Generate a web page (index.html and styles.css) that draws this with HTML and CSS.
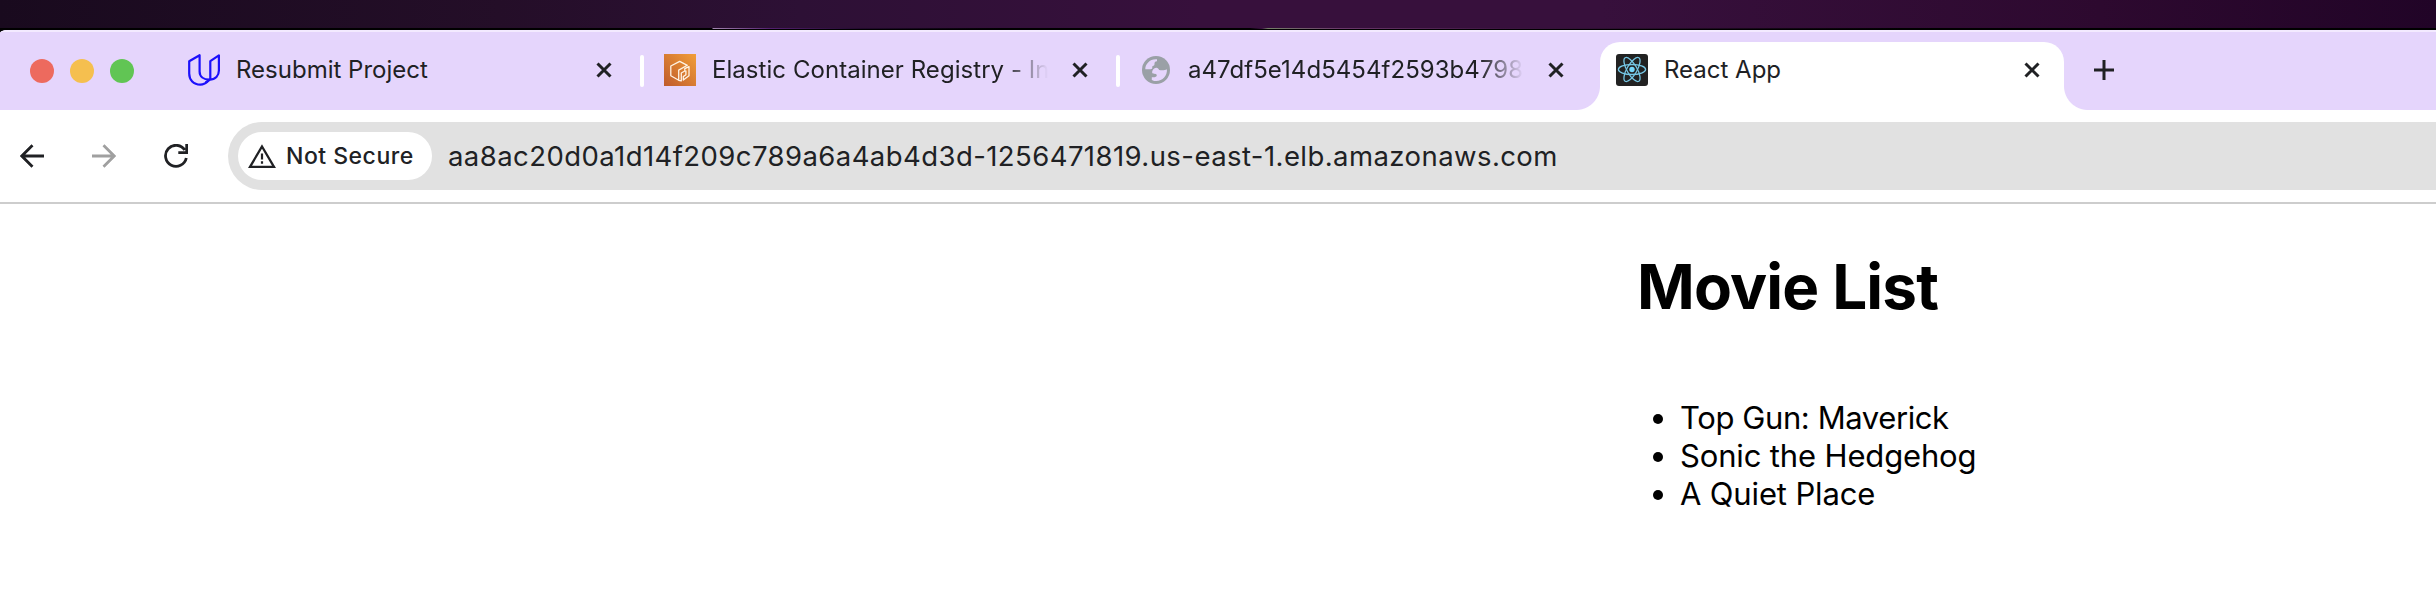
FILE: index.html
```html
<!DOCTYPE html>
<html lang="en">
<head>
<meta charset="utf-8">
<title>React App</title>
<link rel="stylesheet" href="styles.css">
</head>
<body>
<div class="desktop"></div>
<div class="browser">
  <div class="tabstrip">
    <div class="lights"><span class="light red"></span><span class="light yellow"></span><span class="light green"></span></div>
    <div class="tab first">
      <svg class="favicon" viewBox="0 0 32 32" fill="none" stroke="#1c10fb" stroke-width="2.2" stroke-linejoin="round"><path d="M1.2 7.2 11.6 1.2V17.500C11.600 22.500 15.500 25.700 21.500 25.700C18.800 28.500 16 30.700 12.300 30.700C5.500 30.700 1.200 26 1.200 19.500Z"/><path d="M22.300 26V7.200L30.900 1.400V16.500C30.900 21.500 27.500 25.700 21.500 25.700L17.500 28.700"/></svg>
      <span class="title">Resubmit Project</span>
      <svg class="close" viewBox="0 0 16 16"><path d="M1.500 1.500 14.500 14.500M14.500 1.500 1.500 14.500"/></svg>
    </div>
    <span class="separator"></span>
    <div class="tab">
      <svg class="favicon" viewBox="0 0 32 32"><defs><linearGradient id="ecr" x1="0" y1="1" x2="1" y2="0"><stop offset="0" stop-color="#bf5a2b"/><stop offset="1" stop-color="#f19e38"/></linearGradient></defs><path fill="url(#ecr)" d="M0 0H32V32H0Z"/><g fill="none" stroke="#fff3e4" stroke-width="1.300" stroke-linejoin="round"><path d="M14.300 26 6.800 21.700V12L15.700 7.400 23.300 11.300 14.700 16.100V26.300L17.300 26.800V19L20.800 17V14.600L25 12.600V21.700L19.300 26V22.600L21.900 20.800V16.500"/></g></svg>
      <span class="title faded">Elastic Container Registry - In</span>
      <svg class="close" viewBox="0 0 16 16"><path d="M1.500 1.500 14.500 14.500M14.500 1.500 1.500 14.500"/></svg>
    </div>
    <span class="separator"></span>
    <div class="tab third">
      <svg class="favicon" viewBox="0 0 32 32"><circle cx="16" cy="16" r="14" fill="#9aa0a6"/><path fill="#e5d5fc" d="M17 5.300V7.300C14.700 7.500 14.500 8.500 14.500 10.200C14.500 11.700 12.700 11.800 12.300 12.500C12 13.200 12.700 14.200 12 14.700C11 15.500 8 15.200 5.300 15.200C5.200 10 10 4.700 17 5.300ZM16.300 13.800C17.800 13.700 18.500 14.800 19.200 16C21.500 16.600 25 16.500 26.900 15.300C27.500 22 22.300 27.200 15.700 26.900C14 26.900 12.800 26.400 11.800 25.900V23.200C14 23.500 16.800 23.300 16.800 21.300C16.800 19.500 13.500 20.300 12.500 19.300C11.500 18 13 13.900 16.300 13.800Z"/></svg>
      <span class="title faded">a47df5e14d5454f2593b4798</span>
      <svg class="close" viewBox="0 0 16 16"><path d="M1.500 1.500 14.500 14.500M14.500 1.500 1.500 14.500"/></svg>
    </div>
    <div class="tab active">
      <svg class="favicon" viewBox="0 0 32 32"><rect width="32" height="32" rx="3" fill="#222"/><g fill="none" stroke="#76c7e5" stroke-width="1.300"><ellipse cx="16" cy="15.500" rx="13.600" ry="5"/><ellipse cx="16" cy="15.500" rx="13.600" ry="5" transform="rotate(60 16 15.500)"/><ellipse cx="16" cy="15.500" rx="13.600" ry="5" transform="rotate(120 16 15.500)"/></g><circle cx="16" cy="15.500" r="2.700" fill="#76d7fa"/></svg>
      <span class="title">React App</span>
      <svg class="close" viewBox="0 0 16 16"><path d="M1.500 1.500 14.500 14.500M14.500 1.500 1.500 14.500"/></svg>
    </div>
    <svg class="plus" viewBox="0 0 20 20"><path d="M10 0V20M0 10H20"/></svg>
  </div>
  <div class="toolbar">
    <svg class="nav" viewBox="0 0 24 24"><path d="M24 12H2M12.500 1.200 1.800 12 12.500 22.800"/></svg>
    <svg class="nav off" viewBox="0 0 24 24"><path d="M0 12H22M11.500 1.200 22.200 12 11.500 22.800"/></svg>
    <svg class="nav" viewBox="0 0 24 24"><path d="M20.800 6A10.500 10.500 0 1 0 22.300 14M22.700 0V8.700H14.300"/></svg>
    <div class="omnibox">
      <div class="chip">
        <svg class="warn" viewBox="0 0 28 24"><path fill="none" stroke="#202124" stroke-width="2.300" d="M14 2.500 26 22.800H2Z"/><path fill="#202124" d="M12.900 9.500H15.100V15.500H12.900ZM12.900 17.300H15.100V19.700H12.900Z"/></svg>
        <span class="chip-label">Not Secure</span>
      </div>
      <span class="url">aa8ac20d0a1d14f209c789a6a4ab4d3d-1256471819.us-east-1.elb.amazonaws.com</span>
    </div>
  </div>
  <main class="page">
    <h1 class="heading">Movie List</h1>
    <ul class="movies">
      <li class="wide">Top Gun: Maverick</li>
      <li>Sonic the Hedgehog</li>
      <li>A Quiet Place</li>
    </ul>
  </main>
</div>
</body>
</html>
```
FILE: styles.css
```css
* { box-sizing: border-box; }
body { margin: 0; width: 2436px; height: 606px; overflow: hidden; background: #000; font-family: Inter, "Liberation Sans", sans-serif; color: #202124; }
svg { display: block; flex: none; }
.desktop { height: 30px; background:
  linear-gradient(90deg, transparent 712px, #a487b1 713px, #542070 770px, #220a2d 860px, #000 1000px, #000 1250px, #3b1041 1262px, #758067 1268px, #6b396b 1340px, #3d1541 1500px, #000 1900px) 0 28px / 100% 1px no-repeat,
  linear-gradient(#000, #000) 0 28px / 100% 2px no-repeat,
  linear-gradient(90deg, #190a1e, #240e28 500px, #2d1035 800px, #37103c 1200px, #37103c 1600px, #2d092f 2100px, #210427); }
.browser { height: 576px; background: #fff; border-top-left-radius: 8px 3px; overflow: hidden; }
.tabstrip { display: flex; align-items: center; height: 80px; background: #e5d5fc; border-top: 2px solid #f3eaff; }
.lights { display: flex; gap: 16px; width: 158px; padding: 0 0 0 30px; }
.light { width: 24px; height: 24px; border-radius: 50%; flex: none; }
.red { background: #ed6a5e; }
.yellow { background: #f5bf4f; }
.green { background: #61c554; }
.tab { display: flex; align-items: center; width: 472px; height: 78px; padding: 0 28px 2px 20px; }
.tab.first { width: 482px; padding-left: 30px; }
.tab.third { width: 480px; padding-right: 36px; }
.favicon { width: 32px; height: 32px; margin-right: 16px; }
.title { flex: 1; min-width: 0; margin-right: 24px; white-space: nowrap; overflow: hidden; font-size: 24px; line-height: 32px; }
.title.faded { letter-spacing: 0.05px; mask-image: linear-gradient(90deg, #000 calc(100% - 44px), transparent); }
.close { width: 16px; height: 16px; fill: none; stroke: #202124; stroke-width: 3; }
.separator { width: 4px; height: 32px; border-radius: 2px; background: #fff; flex: none; }
.tab.active { position: relative; align-self: flex-end; width: 464px; height: 68px; padding: 0 24px 12px 16px; background: #fff; border-radius: 20px 20px 0 0; }
.tab.active::before, .tab.active::after { content: ""; position: absolute; bottom: 0; width: 24px; height: 24px; }
.tab.active::before { right: 100%; background: radial-gradient(circle at 0 0, transparent 23.500px, #fff 24.500px); }
.tab.active::after { left: 100%; background: radial-gradient(circle at 100% 0, transparent 23.500px, #fff 24.500px); }
.plus { width: 20px; height: 20px; margin: 0 0 2px 30px; fill: none; stroke: #202124; stroke-width: 3; }
.toolbar { display: flex; align-items: center; height: 94px; padding-left: 20px; border-bottom: 2px solid #cdcdcd; }
.nav { width: 24px; height: 24px; margin-right: 48px; fill: none; stroke: #202124; stroke-width: 2.800; }
.nav.off { stroke: #a0a0a0; }
.omnibox { display: flex; align-items: center; flex: 1; height: 68px; margin-left: -8px; padding-left: 10px; background: #e1e1e1; border-radius: 34px 0 0 34px; }
.chip { display: flex; align-items: center; width: 194px; height: 48px; padding-left: 10px; border-radius: 24px; background: #fff; }
.warn { width: 28px; height: 24px; margin-right: 10px; }
.chip-label { font-size: 23px; font-weight: 500; letter-spacing: 0.5px; white-space: nowrap; }
.url { margin-left: 16px; font-size: 27.500px; letter-spacing: 0.43px; white-space: nowrap; }
.page { padding: 45px 0 0 1637px; color: #000; }
.heading { margin: 0; font-size: 62px; line-height: 76px; font-weight: 700; letter-spacing: -0.850px; white-space: nowrap; }
.movies { margin: 74px 0 0; padding: 0 0 0 43px; font-size: 31px; line-height: 38px; letter-spacing: -0.150px; white-space: nowrap; }
.movies .wide { letter-spacing: -0.400px; }
```
